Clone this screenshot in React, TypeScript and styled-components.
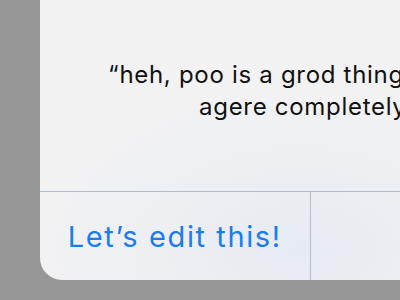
import React from "react";
import styled, { createGlobalStyle } from "styled-components";

const GlobalStyle = createGlobalStyle`
  html, body {
    margin: 0;
    padding: 0;
    overflow: hidden;
    background: #979797;
  }
`;

const Screen = styled.div`
  width: 400px;
  height: 300px;
  padding-left: 40px;
  box-sizing: border-box;
  overflow: hidden;
`;

const Sheet = styled.div`
  width: 540px;
  height: 280px;
  display: flex;
  flex-direction: column;
  border-bottom-left-radius: 22px;
  border-bottom-right-radius: 22px;
  background: radial-gradient(ellipse 260px 160px at 260px 250px, #e6ebf2 0%, rgba(230, 235, 242, 0) 100%),
    #f2f2f3;
  overflow: hidden;
  font-family: Inter, "Liberation Sans", sans-serif;
`;

const Message = styled.div`
  height: 192px;
  box-sizing: border-box;
  padding: 59px 0 0 2px;
  text-align: center;
  font-size: 24px;
  line-height: 32px;
  letter-spacing: 0.7px;
  color: #111;
  border-bottom: 1px solid #adbdcc;
`;

const Line = styled.div`
  white-space: nowrap;
`;

const Actions = styled.div`
  flex: 1;
  display: flex;
`;

const Action = styled.div<{ $divider?: boolean }>`
  flex: 1;
  display: flex;
  align-items: center;
  justify-content: center;
  font-size: 29px;
  letter-spacing: 1.6px;
  color: #1a7cf2;
  border-right: ${(p) => (p.$divider ? "1px solid #adbdcc" : "none")};
`;

export default function App() {
  return (
    <>
      <GlobalStyle />
      <Screen>
        <Sheet>
          <Message>
            <Line>“heh, poo is a grod thing, and so I</Line>
            <Line>agere completely.”</Line>
          </Message>
          <Actions>
            <Action $divider>Let’s edit this!</Action>
            <Action>OK</Action>
          </Actions>
        </Sheet>
      </Screen>
    </>
  );
}
